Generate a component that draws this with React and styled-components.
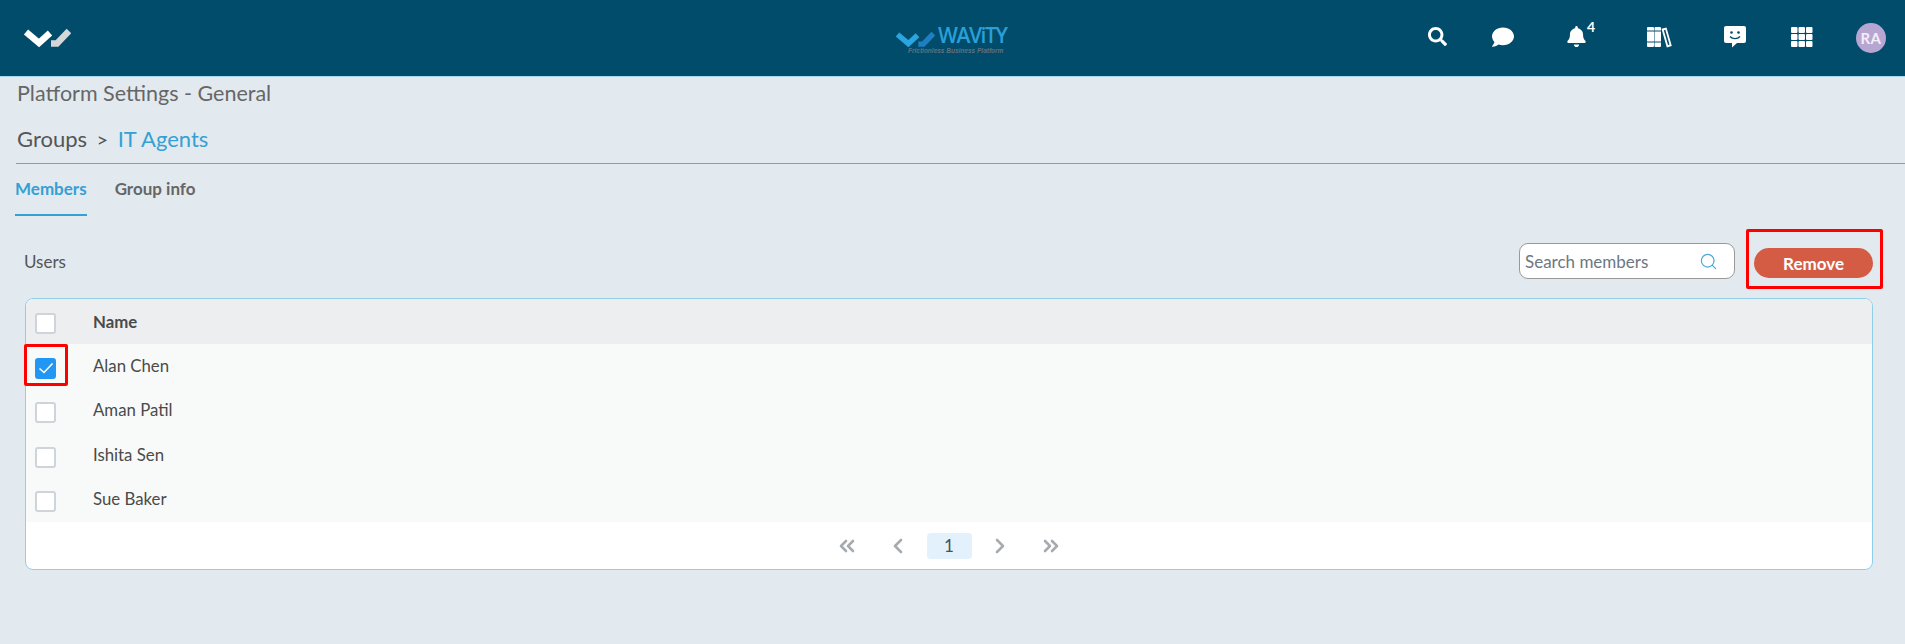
import styled, { createGlobalStyle } from "styled-components";
import { FaSearch, FaComment, FaBell } from "react-icons/fa";
import { FiSearch } from "react-icons/fi";
import { FiChevronLeft, FiChevronRight, FiChevronsLeft, FiChevronsRight } from "react-icons/fi";

const users = ["Alan Chen", "Aman Patil", "Ishita Sen", "Sue Baker"];

const LogoMark = ({ width, first, second }) => (
  <svg width={width} viewBox="0 0 48 20" style={{ display: "block" }}>
    <path d="M3 4 L16 15 L27 5" fill="none" stroke={first} strokeWidth="6.500" />
    <path d="M28 15.500 L34 15.500 L46 3" fill="none" stroke={second} strokeWidth="6.500" />
  </svg>
);

const BooksIcon = () => (
  <svg width="25" height="22" viewBox="0 0 25 22" fill="#fff">
    <path d="M0 2a1 1 0 0 1 1-1h5a1 1 0 0 1 1 1v2.500H0zM0 5.500h7v10H0zM0 16.500h7V20a1 1 0 0 1-1 1H1a1 1 0 0 1-1-1z" />
    <path d="M7.500 2a1 1 0 0 1 1-1h4.500a1 1 0 0 1 1 1v2.500H7.500zM7.500 5.500H14v10H7.500zM7.500 16.500H14V20a1 1 0 0 1-1 1H8.500a1 1 0 0 1-1-1z" />
    <path d="M14.500 2.800 19.500 1.500 24.800 20 19.800 21.500zM16.800 4.200 21 18.900 22.500 18.500 18.300 3.800z" fillRule="evenodd" />
  </svg>
);

const SmileChatIcon = () => (
  <svg width="22" height="22" viewBox="0 0 22 22">
    <path d="M2 0h18a2 2 0 0 1 2 2v13a2 2 0 0 1-2 2H13l-5 4.500V17H2a2 2 0 0 1-2-2V2a2 2 0 0 1 2-2z" fill="#fff" />
    <circle cx="7.500" cy="6.500" r="1.300" fill="#004c6a" />
    <circle cx="14.500" cy="6.500" r="1.300" fill="#004c6a" />
    <path d="M6 10.500c2.500 2.800 7.500 2.800 10 0" fill="none" stroke="#004c6a" strokeWidth="1.400" />
  </svg>
);

const GridIcon = () => (
  <svg width="22" height="20" viewBox="0 0 22 20" fill="#fff">
    {[0, 7.5, 15].map((x) =>
      [0, 7, 14].map((y) => <rect key={`${x}-${y}`} x={x} y={y} width="6.500" height="6" rx="1" />)
    )}
  </svg>
);

const App = () => {
  return (
    <Page>
      <GlobalStyle />
      <NavBar>
        <LogoSlot>
          <LogoMark width={48} first="#fff" second="#d6d6d6" />
        </LogoSlot>
        <BrandLogo>
          <LogoMark width={40} first="#2aa5e0" second="#1f7fc4" />
          <BrandText>
            <BrandName>WAViTY</BrandName>
            <BrandTag>Frictionless Business Platform</BrandTag>
          </BrandText>
        </BrandLogo>
        <NavIcon $left={1428} $top={27}>
          <FaSearch size={19} />
        </NavIcon>
        <NavIcon $left={1492} $top={26}>
          <FaComment size={22} />
        </NavIcon>
        <NavIcon $left={1566} $top={26}>
          <FaBell size={21} />
          <BellCount>4</BellCount>
        </NavIcon>
        <NavIcon $left={1647} $top={26}>
          <BooksIcon />
        </NavIcon>
        <NavIcon $left={1724} $top={26}>
          <SmileChatIcon />
        </NavIcon>
        <NavIcon $left={1791} $top={27}>
          <GridIcon />
        </NavIcon>
        <Avatar>RA</Avatar>
      </NavBar>

      <PageTitle>Platform Settings - General</PageTitle>
      <Breadcrumb>
        <span>Groups</span>
        <Separator>&gt;</Separator>
        <CurrentCrumb>IT Agents</CurrentCrumb>
      </Breadcrumb>

      <Tabs>
        <Tab $active>Members</Tab>
        <Tab>Group info</Tab>
      </Tabs>

      <Toolbar>
        <UsersLabel>Users</UsersLabel>
        <SearchBox>
          <SearchInput placeholder="Search members" readOnly />
          <FiSearch size={19} color="#4aa8d8" strokeWidth={1.5} />
        </SearchBox>
        <RemoveHighlight>
          <RemoveButton>Remove</RemoveButton>
        </RemoveHighlight>
      </Toolbar>

      <Card>
        <HeaderRow>
          <CheckCell>
            <CheckBox />
          </CheckCell>
          <HeaderName>Name</HeaderName>
        </HeaderRow>
        {users.map((name, i) => (
          <UserRow key={name}>
            <CheckCell>
              {i === 0 ? (
                <>
                  <CheckHighlight />
                  <CheckBox $checked>
                    <svg width="16" height="12" viewBox="0 0 16 12">
                      <path d="M1.500 6.500 6 10.500 14.500 1.500" fill="none" stroke="#fff" strokeWidth="1.600" />
                    </svg>
                  </CheckBox>
                </>
              ) : (
                <CheckBox />
              )}
            </CheckCell>
            <UserName>{name}</UserName>
          </UserRow>
        ))}
        <Pager>
          <PagerArrow>
            <FiChevronsLeft size={24} strokeWidth={2.6} />
          </PagerArrow>
          <PagerArrow>
            <FiChevronLeft size={24} strokeWidth={2.6} />
          </PagerArrow>
          <PageNumber>1</PageNumber>
          <PagerArrow>
            <FiChevronRight size={24} strokeWidth={2.6} />
          </PagerArrow>
          <PagerArrow>
            <FiChevronsRight size={24} strokeWidth={2.6} />
          </PagerArrow>
        </Pager>
      </Card>
    </Page>
  );
};

const GlobalStyle = createGlobalStyle`
  html, body {
    margin: 0;
    padding: 0;
    background: #e2eaf0;
    font-family: Lato, "Noto Sans", sans-serif;
  }
`;

const Page = styled.div`
  width: 1905px;
  height: 644px;
  overflow: hidden;
  background: #e2eaf0;
`;

const NavBar = styled.header`
  position: relative;
  height: 76px;
  background: #004c6a;
  border-bottom: 1px solid #a9d6ec;
  box-sizing: content-box;
  display: flex;
  align-items: center;
`;

const LogoSlot = styled.div`
  margin-left: 23px;
  margin-top: -1px;
`;

const BrandLogo = styled.div`
  position: absolute;
  left: 895px;
  top: 25px;
  display: flex;
  gap: 3px;
`;

const BrandText = styled.div`
  display: flex;
  flex-direction: column;
`;

const BrandName = styled.div`
  color: #2a9fd8;
  font-size: 21px;
  line-height: 21px;
  font-weight: 600;
  letter-spacing: -1.4px;
  font-family: "Open Sans", sans-serif;
`;

const BrandTag = styled.div`
  margin-left: -30px;
  margin-top: 1px;
  color: #5f7280;
  font-size: 6.5px;
  line-height: 7px;
  font-style: italic;
  font-weight: 700;
  white-space: nowrap;
  font-family: "Liberation Sans", sans-serif;
`;

const NavIcon = styled.div`
  position: absolute;
  left: ${({ $left }) => $left}px;
  top: ${({ $top }) => $top}px;
  color: #fff;
  display: flex;
`;

const BellCount = styled.span`
  position: absolute;
  right: -8px;
  top: -6px;
  font-size: 14px;
  font-weight: 700;
  line-height: 14px;
  color: #fff;
`;

const Avatar = styled.div`
  position: absolute;
  left: 1856px;
  top: 23px;
  width: 30px;
  height: 30px;
  border-radius: 50%;
  background: #b8a6d2;
  color: #f3eef8;
  font-size: 15px;
  font-weight: 700;
  letter-spacing: 0.5px;
  display: flex;
  align-items: center;
  justify-content: center;
`;

const PageTitle = styled.h1`
  margin: 0;
  padding: 3px 0 0 17px;
  font-size: 21.5px;
  line-height: 26px;
  font-weight: 400;
  color: #666;
`;

const Breadcrumb = styled.div`
  display: flex;
  align-items: center;
  margin-left: 16px;
  padding: 18px 0 9px 1px;
  height: 30px;
  border-bottom: 1px solid #999;
  font-size: 22px;
  line-height: 30px;
  color: #555;
  box-sizing: content-box;
`;

const Separator = styled.span`
  margin: 0 9.5px;
  font-size: 20px;
`;

const CurrentCrumb = styled.span`
  color: #35a0d4;
`;

const Tabs = styled.div`
  display: flex;
  gap: 28px;
  margin-left: 15px;
`;

const Tab = styled.div`
  height: 52px;
  padding-top: 13px;
  box-sizing: border-box;
  font-size: 17px;
  line-height: 24px;
  font-weight: 700;
  color: ${({ $active }) => ($active ? "#35a0d4" : "#666")};
  border-bottom: 2px solid ${({ $active }) => ($active ? "#35a0d4" : "transparent")};
`;

const Toolbar = styled.div`
  display: flex;
  align-items: center;
  margin-top: 13px;
  height: 60px;
  padding-left: 24px;
`;

const UsersLabel = styled.div`
  flex: 1;
  font-size: 17px;
  color: #555;
  margin-top: 4px;
`;

const SearchBox = styled.div`
  width: 216px;
  height: 36px;
  box-sizing: border-box;
  margin-right: 11px;
  margin-top: 4px;
  padding: 0 16px 0 5px;
  display: flex;
  align-items: center;
  background: #fff;
  border: 1px solid #999;
  border-radius: 9px;
`;

const SearchInput = styled.input`
  flex: 1;
  min-width: 0;
  border: 0;
  outline: 0;
  padding: 0;
  background: transparent;
  font: 400 17px Lato, sans-serif;
  &::placeholder {
    color: #6d7782;
    opacity: 1;
  }
`;

const RemoveHighlight = styled.div`
  width: 137px;
  height: 60px;
  box-sizing: border-box;
  margin-right: 22px;
  padding: 16px 7px 8px 5px;
  border: 3px solid #f00;
  border-radius: 2px;
  display: flex;
`;

const RemoveButton = styled.button`
  width: 119px;
  height: 30px;
  padding: 0;
  border: 0;
  border-radius: 15px;
  background: #d45c45;
  color: #fff;
  font: 700 17px Lato, sans-serif;
`;

const Card = styled.div`
  margin: 9px 0 0 25px;
  width: 1848px;
  height: 272px;
  box-sizing: border-box;
  background: #fff;
  border: 1px solid #8fd0e8;
  border-radius: 8px;
`;

const rowBase = `
  display: flex;
  align-items: center;
`;

const HeaderRow = styled.div`
  ${rowBase}
  height: 45px;
  border-radius: 7px 7px 0 0;
  background: #eceef0;
`;

const UserRow = styled.div`
  ${rowBase}
  height: 44.5px;
  background: #f8faf9;
`;

const CheckCell = styled.div`
  position: relative;
  width: 67px;
  padding-left: 9px;
  box-sizing: border-box;
  display: flex;
  align-items: center;
`;

const CheckHighlight = styled.div`
  position: absolute;
  left: -2px;
  top: -10px;
  width: 44px;
  height: 42px;
  box-sizing: border-box;
  border: 3px solid #f00;
  border-radius: 2px;
`;

const CheckBox = styled.div`
  width: 21px;
  height: 21px;
  margin-top: 4px;
  box-sizing: border-box;
  border-radius: 3px;
  background: ${({ $checked }) => ($checked ? "#2196f3" : "#fff")};
  border: 2px solid ${({ $checked }) => ($checked ? "#2196f3" : "#ced4da")};
  display: flex;
  align-items: center;
  justify-content: center;
`;

const HeaderName = styled.div`
  margin-bottom: 1px;
  font-size: 16.8px;
  font-weight: 700;
  color: #4a4a4a;
`;

const UserName = styled.div`
  padding-bottom: 2px;
  font-size: 16.8px;
  color: #4a4a4a;
`;

const Pager = styled.div`
  height: 47px;
  padding-top: 1px;
  box-sizing: border-box;
  display: flex;
  align-items: center;
  justify-content: center;
`;

const PagerArrow = styled.div`
  width: 51px;
  display: flex;
  justify-content: center;
  color: #a6abb0;
`;

const PageNumber = styled.div`
  width: 45px;
  height: 26px;
  margin: 0 3px;
  border-radius: 4px;
  background: #e3f1fc;
  color: #495057;
  font-size: 17px;
  line-height: 26px;
  text-align: center;
`;

export default App;
